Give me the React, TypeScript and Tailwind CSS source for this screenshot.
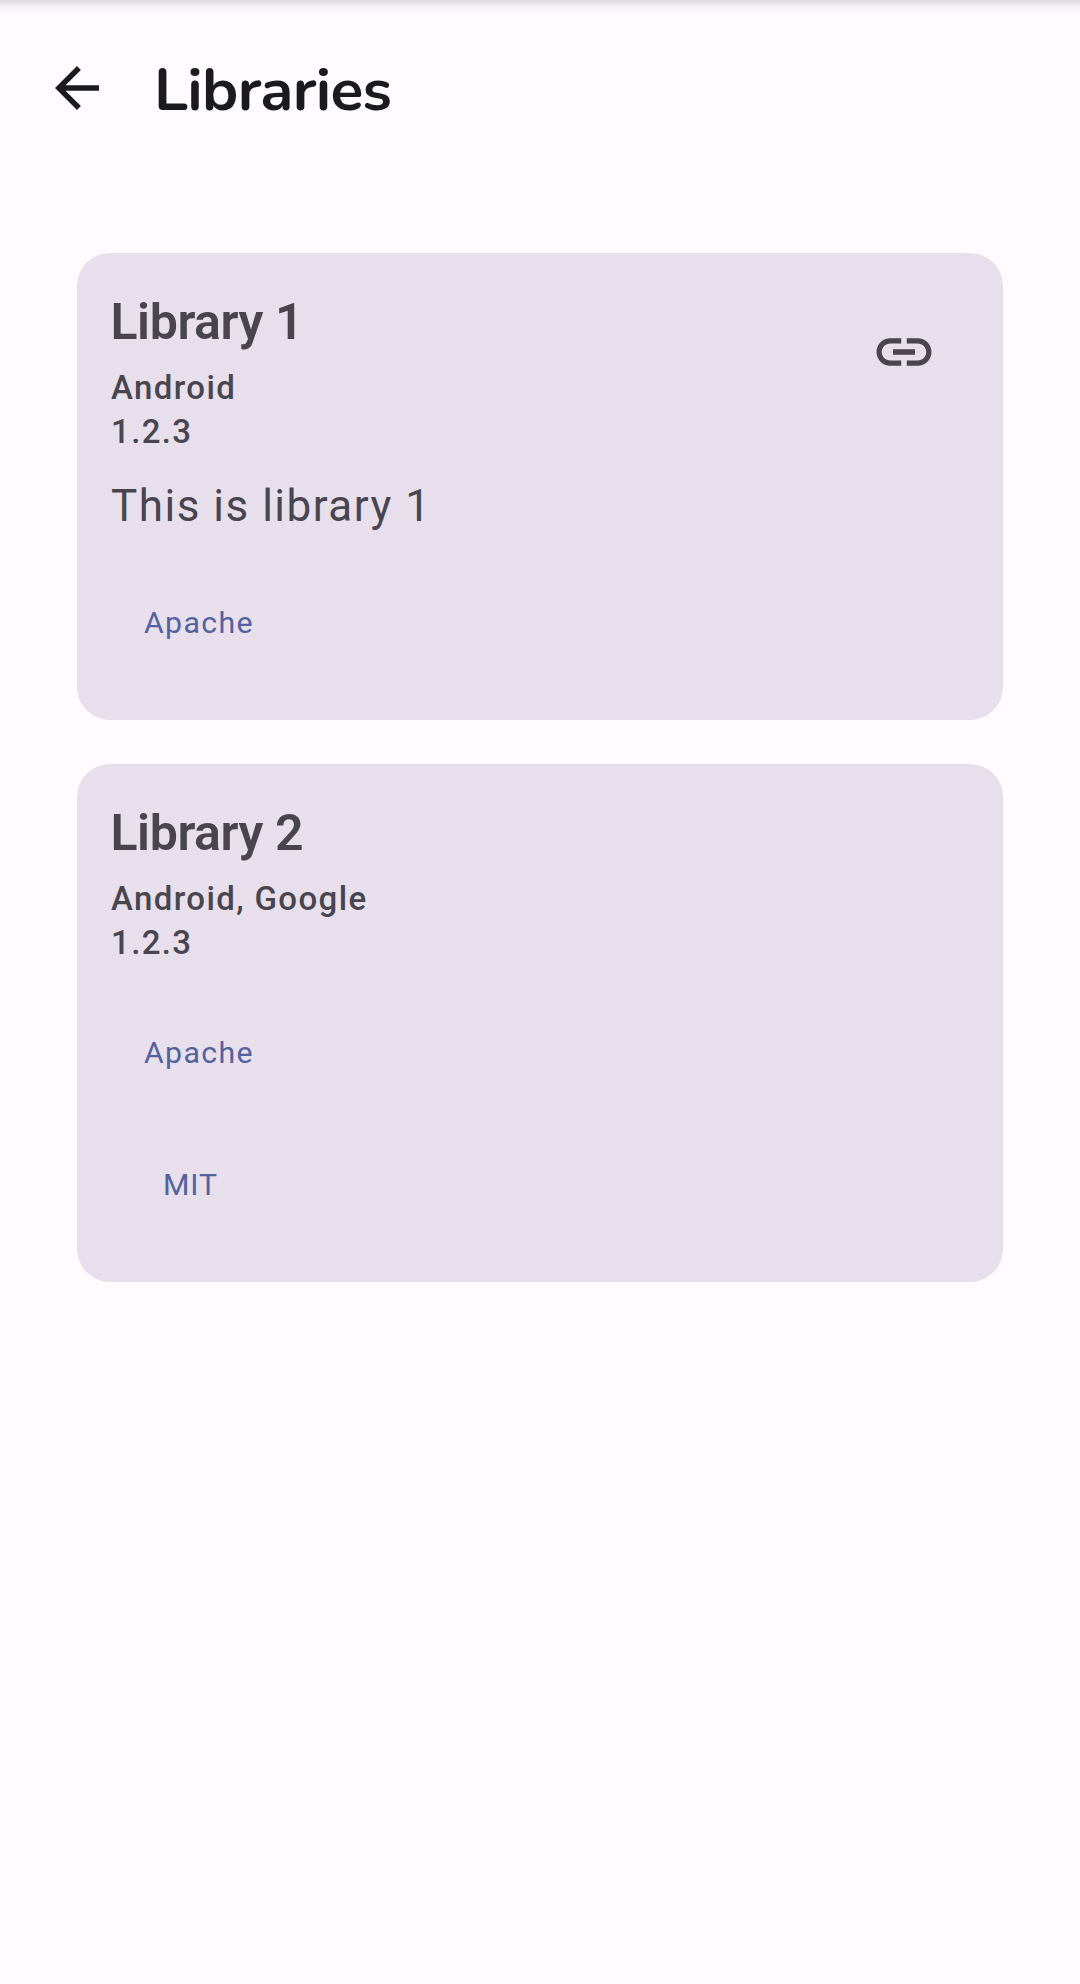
import React from "react";

type License = { name: string; style: string };

type LibraryProps = {
  name: string;
  author: string;
  version: string;
  description?: string;
  licenses: License[];
  link?: boolean;
  size: string;
};

function Library({ name, author, version, description, licenses, link, size }: LibraryProps) {
  return (
    <section className={`flex items-start justify-between rounded-[33px] bg-[#e7e0ec] pl-[34px] pr-[66px] text-[#49454f] ${size}`}>
      <div className="pt-[36px]">
        <h2 className="-ml-[0.5px] h-[66px] text-[50px] font-semibold leading-[66px] tracking-[-0.42px]">{name}</h2>
        <p className="mt-[11px] h-[44px] text-[33px] font-medium leading-[44px] tracking-[1.375px]">{author}</p>
        <p className="h-[44px] text-[33px] font-medium leading-[44px] tracking-[1.375px]">{version}</p>
        {description && (
          <p className="mt-[19px] h-[66px] text-[44px] leading-[66px] tracking-[1.5px]">{description}</p>
        )}
        <div className={description ? "mt-[18px]" : "mt-[22px]"}>
          {licenses.map((l) => (
            <p key={l.name} className={`h-[132px] text-[30.25px] leading-[132px] text-[#5361a0] ${l.style}`}>
              {l.name}
            </p>
          ))}
        </div>
      </div>
      {link && (
        <svg className="mt-[66px] size-[66px]" viewBox="0 0 24 24" fill="currentColor">
          <path d="M3.9 12c0-1.71 1.39-3.1 3.1-3.1h4V7H7c-2.76 0-5 2.24-5 5s2.24 5 5 5h4v-1.9H7c-1.71 0-3.1-1.39-3.1-3.1zM8 13h8v-2H8v2zm9-6h-4v1.9h4c1.71 0 3.1 1.39 3.1 3.1s-1.39 3.1-3.1 3.1h-4V17h4c2.76 0 5-2.24 5-5s-2.24-5-5-5z" />
        </svg>
      )}
    </section>
  );
}

export default function App() {
  return (
    <div className="h-[1984px] w-[1080px] overflow-hidden bg-[#fffbff] font-['Roboto',sans-serif]">
      <div className="h-[16px] bg-linear-to-b from-[#dad8da] via-[#f4f0f4] via-40% to-[#fffbff]" />
      <header className="flex h-[150px] items-start pl-[44px] text-[#1b1b1f]">
        <svg className="mt-[39px] size-[66px]" viewBox="0 0 24 24" fill="currentColor">
          <path d="M20 11H7.83l5.59-5.59L12 4l-8 8 8 8 1.41-1.41L7.83 13H20v-2z" />
        </svg>
        <h1 className="ml-[44px] mt-[34px] font-['Nunito','Open_Sans',sans-serif] text-[60.5px] font-bold leading-[80px] tracking-[-0.7px]">
          Libraries
        </h1>
      </header>
      <main className="flex flex-col gap-[44px] px-[77px] pt-[87px]">
        <Library
          name="Library 1"
          author="Android"
          version="1.2.3"
          description="This is library 1"
          link
          licenses={[{ name: "Apache", style: "pl-[33px] tracking-[1.375px]" }]}
          size="h-[467px]"
        />
        <Library
          name="Library 2"
          author="Android, Google"
          version="1.2.3"
          licenses={[
            { name: "Apache", style: "pl-[33px] tracking-[1.375px]" },
            { name: "MIT", style: "pl-[52px] tracking-[0.9px]" },
          ]}
          size="h-[518px]"
        />
      </main>
    </div>
  );
}
